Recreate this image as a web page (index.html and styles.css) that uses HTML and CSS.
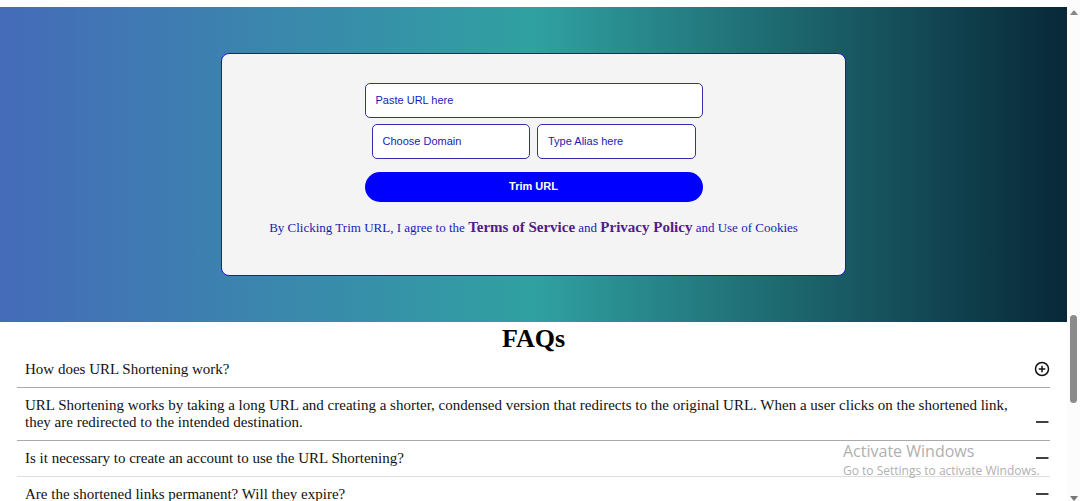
FILE: index.html
```html
<!DOCTYPE html>
<html lang="en">
<head>
<meta charset="utf-8">
<meta name="viewport" content="width=device-width, initial-scale=1">
<title>Trim URL</title>
<link rel="stylesheet" href="styles.css">
</head>
<body>
<div class="window">
  <main class="page">
    <section class="hero">
      <form class="card">
        <input class="field" type="text" placeholder="Paste URL here" aria-label="Paste URL here">
        <div class="field-row">
          <input class="field" type="text" placeholder="Choose Domain" aria-label="Choose Domain">
          <input class="field" type="text" placeholder="Type Alias here" aria-label="Type Alias here">
        </div>
        <button class="submit" type="button">Trim URL</button>
        <p class="consent">By Clicking Trim URL, I agree to the <a href="#">Terms of Service</a> and <a href="#">Privacy Policy</a> and Use of Cookies</p>
      </form>
    </section>
    <section class="faq">
      <h1 class="faq-title">FAQs</h1>
      <div class="faq-list">
        <div class="faq-item">
          <span class="faq-text">How does URL Shortening work?</span>
          <button class="toggle" type="button" aria-label="Expand">
            <svg viewBox="0 0 16 16" fill="none" stroke="currentColor"><circle cx="8" cy="8" r="6.5" stroke-width="1.5"/><path d="M8 4.7v6.6M4.7 8h6.6" stroke-width="1.5"/></svg>
          </button>
        </div>
        <div class="faq-item">
          <span class="faq-text">URL Shortening works by taking a long URL and creating a shorter, condensed version that redirects to the original URL. When a user clicks on the shortened link, they are redirected to the intended destination.</span>
          <button class="toggle" type="button" aria-label="Collapse">
            <svg viewBox="0 0 16 16" fill="none" stroke="currentColor"><path d="M2 8h12.500" stroke-width="1.6"/></svg>
          </button>
        </div>
        <div class="faq-item faq-item-light">
          <span class="faq-text">Is it necessary to create an account to use the URL Shortening?</span>
          <button class="toggle" type="button" aria-label="Collapse">
            <svg viewBox="0 0 16 16" fill="none" stroke="currentColor"><path d="M2 8h12.500" stroke-width="1.6"/></svg>
          </button>
        </div>
        <div class="faq-item">
          <span class="faq-text">Are the shortened links permanent? Will they expire?</span>
          <button class="toggle" type="button" aria-label="Collapse">
            <svg viewBox="0 0 16 16" fill="none" stroke="currentColor"><path d="M2 8h12.500" stroke-width="1.6"/></svg>
          </button>
        </div>
      </div>
    </section>
  </main>
  <div class="scrollbar" aria-hidden="true">
    <svg class="arrow" viewBox="0 0 8 5"><path d="M0 5 3 1Q4 0 5 1L8 5Z" fill="#888"/></svg>
    <div class="track"><div class="thumb"></div></div>
    <svg class="arrow" viewBox="0 0 8 5"><path d="M0 0 3 4Q4 5 5 4L8 0Z" fill="#777"/></svg>
  </div>
</div>
<div class="watermark">
  <div class="watermark-title">Activate Windows</div>
  <div class="watermark-text">Go to Settings to activate Windows.</div>
</div>
</body>
</html>
```
FILE: styles.css
```css
* {
  box-sizing: border-box;
}

body {
  margin: 0;
  background: #fff;
  color: #111;
  font-family: "Liberation Serif", "Times New Roman", serif;
}

.window {
  display: flex;
  height: 100vh;
  overflow: hidden;
}

.page {
  flex: 1;
  min-width: 0;
  padding-top: 7px;
}

.hero {
  display: flex;
  justify-content: center;
  padding: 46px 16px;
  background: linear-gradient(to right, #456bb9, #30a1a1 50%, #082838);
}

.card {
  display: flex;
  flex-direction: column;
  align-items: center;
  width: 100%;
  max-width: 625px;
  padding: 29px 16px 38px;
  border: 1px solid #1818d0;
  border-radius: 8px;
  background: #f4f4f4;
}

.field {
  width: 100%;
  max-width: 338px;
  height: 35px;
  padding: 0 10px 2px;
  border: 1px solid #3030a8;
  border-radius: 5px;
  background: #fff;
  color: #1a1ab8;
  font: 11px "Liberation Sans", Arial, sans-serif;
}

.field::placeholder {
  color: #1a1ab8;
  opacity: 1;
}

.field-row {
  display: flex;
  gap: 7px;
  width: 100%;
  max-width: 324px;
  margin: 6px 0 13px;
}

.field-row .field {
  flex: 1;
  min-width: 0;
}

.submit {
  width: 100%;
  max-width: 338px;
  height: 30px;
  padding: 0 0 2px;
  border: 0;
  border-radius: 15px;
  background: #00f;
  color: #fff;
  font: bold 11px "Liberation Sans", Arial, sans-serif;
}

.consent {
  margin: 17px 0 0;
  color: #1a1ab8;
  font-size: 13px;
  line-height: 18px;
}

.consent a {
  color: #551a8b;
  font-size: 15px;
  font-weight: bold;
  line-height: 15px;
  text-decoration: none;
}

.faq {
  padding: 0 17px;
}

.faq-title {
  margin: 0;
  padding-top: 3px;
  color: #000;
  font-size: 26px;
  line-height: 27px;
  text-align: center;
}

.faq-item {
  display: flex;
  align-items: flex-end;
  gap: 8px;
  padding: 9px 0 9px 8px;
  border-bottom: 1px solid #aaa;
  font-size: 15px;
  line-height: 17px;
}

.faq-item-light {
  border-color: #ddd;
}

.faq-text {
  flex: 1;
}

.toggle {
  width: 16px;
  height: 17px;
  padding: 0 0 1px;
  border: 0;
  background: none;
  color: #111;
}

.toggle svg {
  display: block;
}

.scrollbar {
  display: flex;
  flex-direction: column;
  align-items: center;
  width: 13px;
  padding-top: 10px;
  background: #fcfcfc;
}

.arrow {
  width: 8px;
  height: 5px;
}

.track {
  display: flex;
  flex: 1;
  flex-direction: column;
  justify-content: flex-end;
  padding-bottom: 93px;
}

.thumb {
  width: 7px;
  height: 88px;
  border-radius: 4px;
  background: #8b8b8b;
}

.watermark {
  position: absolute;
  right: 44px;
  bottom: 21px;
  width: 193px;
  color: #b0b0b0;
  font-family: "Open Sans", "Noto Sans", sans-serif;
  pointer-events: none;
}

.watermark-title {
  font-size: 16px;
  line-height: 21px;
}

.watermark-text {
  font-size: 12px;
  line-height: 18px;
  white-space: nowrap;
}
```
